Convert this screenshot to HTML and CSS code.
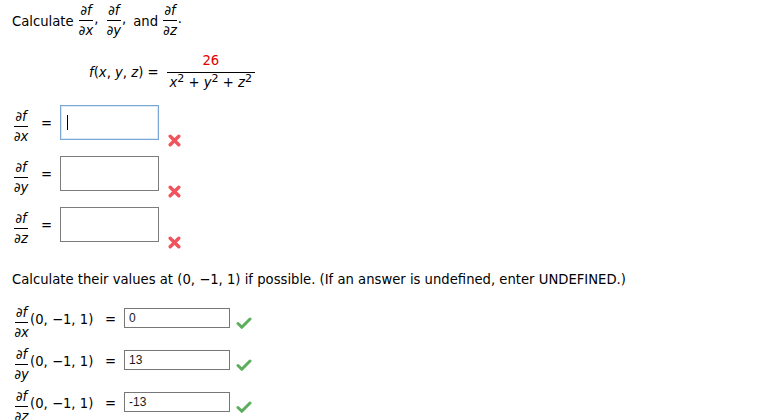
FILE: index.html
```html
<!DOCTYPE html>
<html>
<head>
<meta charset="utf-8">
<link rel="stylesheet" href="styles.css">
</head>
<body>
<div class="q">
  <div class="intro">
    <span>Calculate</span>
    <span class="frac"><span class="num">∂<i>f</i></span><span class="den">∂<i>x</i></span></span><span class="comma">,</span>
    <span class="frac"><span class="num">∂<i>f</i></span><span class="den">∂<i>y</i></span></span><span class="comma">,</span>
    <span>and</span>
    <span class="frac"><span class="num">∂<i>f</i></span><span class="den">∂<i>z</i></span></span><span class="comma">.</span>
  </div>

  <div class="func">
    <span><i>f</i>(<i>x</i>, <i>y</i>, <i>z</i>) =</span>
    <span class="frac big"><span class="num red">26</span><span class="den"><i>x</i><sup>2</sup> + <i>y</i><sup>2</sup> + <i>z</i><sup>2</sup></span></span>
  </div>

  <div class="parts">
    <div class="prow">
      <span class="frac"><span class="num">∂<i>f</i></span><span class="den">∂<i>x</i></span></span>
      <span class="eq">=</span>
      <span class="box focus"><span class="caret"></span></span>
      <svg class="xmark" width="13" height="13" viewBox="0 0 13 13"><path d="M2.2 2.2 L10.8 10.8 M10.8 2.2 L2.2 10.8" stroke="#f0535b" stroke-width="3.4" stroke-linecap="round"/></svg>
    </div>
    <div class="prow">
      <span class="frac"><span class="num">∂<i>f</i></span><span class="den">∂<i>y</i></span></span>
      <span class="eq">=</span>
      <span class="box"></span>
      <svg class="xmark" width="13" height="13" viewBox="0 0 13 13"><path d="M2.2 2.2 L10.8 10.8 M10.8 2.2 L2.2 10.8" stroke="#f0535b" stroke-width="3.4" stroke-linecap="round"/></svg>
    </div>
    <div class="prow">
      <span class="frac"><span class="num">∂<i>f</i></span><span class="den">∂<i>z</i></span></span>
      <span class="eq">=</span>
      <span class="box"></span>
      <svg class="xmark" width="13" height="13" viewBox="0 0 13 13"><path d="M2.2 2.2 L10.8 10.8 M10.8 2.2 L2.2 10.8" stroke="#f0535b" stroke-width="3.4" stroke-linecap="round"/></svg>
    </div>
  </div>

  <p class="text">Calculate their values at (0, −1, 1) if possible. (If an answer is undefined, enter UNDEFINED.)</p>

  <div class="vals">
    <div class="vrow">
      <span class="frac"><span class="num">∂<i>f</i></span><span class="den">∂<i>x</i></span></span><span class="pt">(0, −1, 1)</span>
      <span class="eq">=</span>
      <span class="small">0</span>
      <svg class="check" width="16" height="14" viewBox="0 0 16 14"><path d="M2 7.5 L5.8 11.3 L14 3" fill="none" stroke="#5cae5c" stroke-width="3" stroke-linejoin="round" stroke-linecap="round"/></svg>
    </div>
    <div class="vrow">
      <span class="frac"><span class="num">∂<i>f</i></span><span class="den">∂<i>y</i></span></span><span class="pt">(0, −1, 1)</span>
      <span class="eq">=</span>
      <span class="small">13</span>
      <svg class="check" width="16" height="14" viewBox="0 0 16 14"><path d="M2 7.5 L5.8 11.3 L14 3" fill="none" stroke="#5cae5c" stroke-width="3" stroke-linejoin="round" stroke-linecap="round"/></svg>
    </div>
    <div class="vrow">
      <span class="frac"><span class="num">∂<i>f</i></span><span class="den">∂<i>z</i></span></span><span class="pt">(0, −1, 1)</span>
      <span class="eq">=</span>
      <span class="small">-13</span>
      <svg class="check" width="16" height="14" viewBox="0 0 16 14"><path d="M2 7.5 L5.8 11.3 L14 3" fill="none" stroke="#5cae5c" stroke-width="3" stroke-linejoin="round" stroke-linecap="round"/></svg>
    </div>
  </div>
</div>
</body>
</html>
```

FILE: styles.css
```css
html, body {
  margin: 0;
  padding: 0;
  background: #fff;
}
body {
  font-family: "DejaVu Sans", Verdana, sans-serif;
  font-size: 13.2px;
  color: #000;
}
.q {
  padding: 5px 12px 0 12px;
}
i {
  font-style: italic;
}
.frac {
  display: inline-flex;
  flex-direction: column;
  align-items: center;
  vertical-align: middle;
  line-height: 14px;
}
.frac .num {
  padding: 0 1px 2px 1px;
  border-bottom: 1px solid #000;
}
.frac .den {
  padding: 3px 1px 0 1px;
}
.intro {
  display: flex;
  align-items: center;
  gap: 4px;
  height: 32px;
}
.intro .comma {
  margin-left: -4px;
  margin-right: 3px;
  margin-bottom: 6px;
}
.func {
  display: flex;
  align-items: center;
  gap: 8px;
  margin-left: 77px;
  margin-top: 16px;
  height: 38px;
}
.frac.big .num {
  padding: 0 3px 4px 3px;
  width: calc(100% - 6px);
  text-align: center;
}
.frac.big .den {
  padding: 3px 3px 0 3px;
}
.red {
  color: #e00000;
}
sup {
  font-size: 11px;
  vertical-align: 5px;
  line-height: 0;
}
.parts {
  margin-top: 14px;
  display: flex;
  flex-direction: column;
  gap: 16px;
}
.prow {
  display: flex;
  align-items: center;
  height: 35px;
}
.prow .frac {
  width: 18px;
  margin-top: 8px;
}
.prow .eq {
  margin-left: 11px;
  width: 19px;
  margin-top: 2px;
}
.box {
  box-sizing: border-box;
  width: 99px;
  height: 35px;
  border: 1px solid #7c7c7c;
  background: #fff;
  position: relative;
}
.box.focus {
  border: 1px solid #7aa7d4;
  box-shadow: inset 0 0 0 1px #dbe8f5;
}
.caret {
  position: absolute;
  left: 6px;
  top: 9px;
  width: 1px;
  height: 15px;
  background: #000;
}
.xmark {
  margin-left: 9px;
  align-self: flex-end;
  margin-bottom: -7px;
}
.text {
  margin: 30px 0 0 0;
  line-height: 16px;
}
.vals {
  margin-top: 11px;
  display: flex;
  flex-direction: column;
  gap: 4px;
}
.vrow {
  display: flex;
  align-items: center;
  height: 38px;
}
.vrow .frac {
  width: 19px;
  margin-top: 9px;
}
.vrow .pt {
  margin-left: -1px;
  width: 75px;
  margin-top: 3px;
}
.vrow .eq {
  width: 19px;
  margin-top: 2px;
}
.small {
  box-sizing: border-box;
  width: 106px;
  height: 20px;
  border: 1px solid #777;
  font-family: "Liberation Sans", Arial, sans-serif;
  font-size: 12px;
  line-height: 18px;
  padding-left: 4px;
  color: #1a1a1a;
}
.check {
  margin-left: 6px;
  margin-top: 9px;
}
```
